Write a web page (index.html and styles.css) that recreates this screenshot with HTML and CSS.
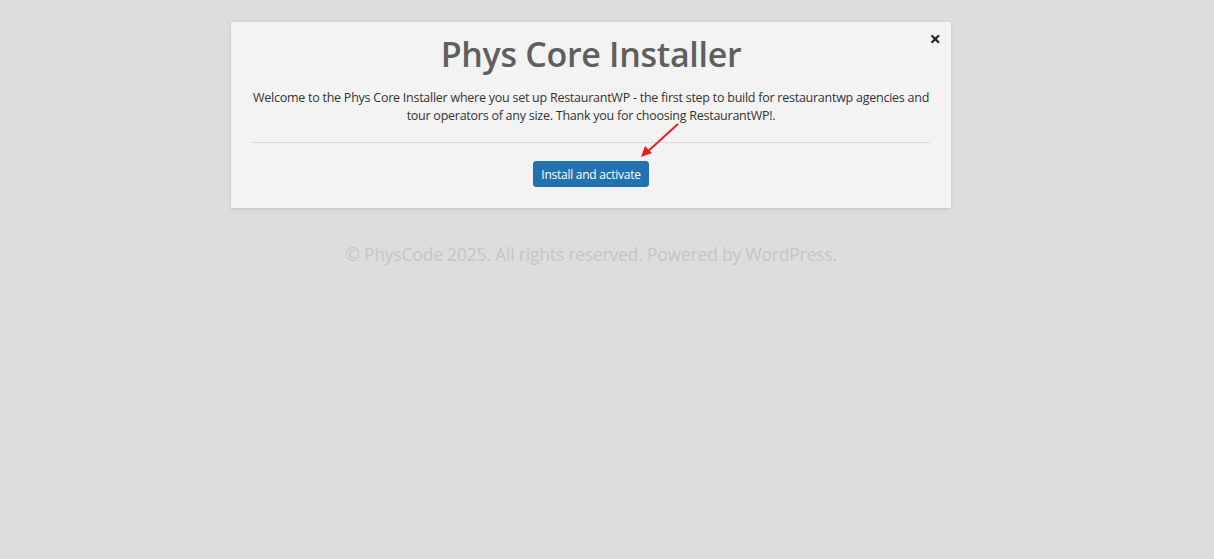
FILE: index.html
```html
<!DOCTYPE html>
<html lang="en">
<head>
    <meta charset="UTF-8">
    <meta name="viewport" content="width=device-width, initial-scale=1.0">
    <title>Phys Core Installer</title>
    <link rel="stylesheet" href="styles.css">
</head>
<body>
    <div class="wrap">
        <div class="installer">
            <span class="close">&times;</span>
            <h1 class="title">Phys Core Installer</h1>
            <p class="intro">Welcome to the Phys Core Installer where you set up RestaurantWP - the first step to build for restaurantwp agencies and tour operators of any size. Thank you for choosing RestaurantWP!.</p>
            <hr class="line">
            <div class="actions">
                <button class="btn">Install and activate</button>
            </div>
            <!-- annotation arrow -->
            <svg class="arrow" width="50" height="45" viewBox="0 0 50 45">
                <line x1="46" y1="2" x2="14" y2="31" stroke="#ee1c1c" stroke-width="2"/>
                <polygon points="9,35 13,24 20,31" fill="#ee1c1c"/>
            </svg>
        </div>
        <p class="footer">&copy; PhysCode 2025. All rights reserved. Powered by WordPress.</p>
    </div>
</body>
</html>
```

FILE: styles.css
```css
*{
    margin:0;
    padding:0;
    box-sizing:border-box;
}
body{
    background:#dddddd;
    font-family:"Open Sans","Noto Sans",sans-serif;
    padding-right:32px;
}
.wrap{
    width:720px;
    margin:22px auto 0;
}
.installer{
    position:relative;
    background:#f3f3f3;
    box-shadow:0 1px 3px rgba(0,0,0,0.13);
    padding:10px 21px 21px;
    text-align:center;
}
.close{
    position:absolute;
    right:10px;
    top:7px;
    font-size:20px;
    font-weight:bold;
    color:#222;
    line-height:20px;
}
.title{
    font-size:34px;
    font-weight:600;
    color:#5f5f5f;
    line-height:44px;
    letter-spacing:-0.3px;
}
.intro{
    margin-top:13px;
    font-size:12.5px;
    line-height:18px;
    color:#333;
    letter-spacing:-0.25px;
}
.line{
    border:0;
    border-top:1px solid #dcdcdc;
    margin-top:17px;
}
.actions{
    margin-top:18px;
}
.btn{
    background:#2271b1;
    color:#fff;
    border:1px solid #2271b1;
    border-radius:3px;
    height:26px;
    padding:0 7px;
    font-family:inherit;
    font-size:12px;
    letter-spacing:-0.25px;
}
.arrow{
    position:absolute;
    left:401px;
    top:100px;
}
.footer{
    margin-top:34px;
    text-align:center;
    font-size:17.5px;
    color:#c6c6c6;
    letter-spacing:-0.2px;
}
```
